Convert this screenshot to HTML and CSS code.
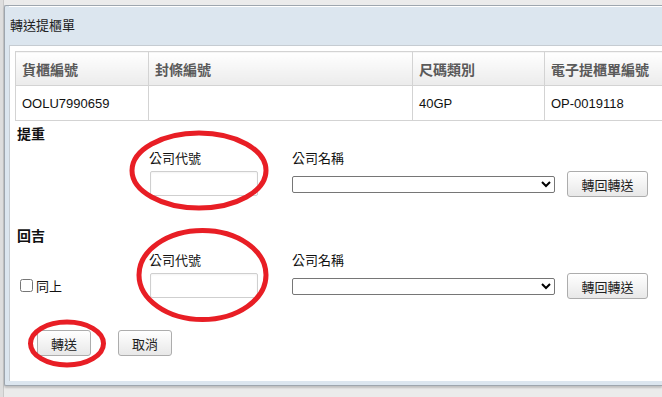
FILE: index.html
```html
<!DOCTYPE html>
<html lang="zh-Hant">
<head>
    <meta charset="UTF-8">
    <meta name="viewport" content="width=device-width, initial-scale=1.0">
    <title>轉送提櫃單</title>
    <link rel="stylesheet" href="styles.css">
</head>
<body>
    <div class="page-edge"></div>

    <div class="dialog">
        <div class="dialog-title">轉送提櫃單</div>
        <div class="dialog-body">
            <table class="grid">
                <colgroup>
                    <col class="c1"><col class="c2"><col class="c3"><col class="c4">
                </colgroup>
                <thead>
                    <tr>
                        <th>貨櫃編號</th>
                        <th>封條編號</th>
                        <th>尺碼類別</th>
                        <th>電子提櫃單編號</th>
                    </tr>
                </thead>
                <tbody>
                    <tr>
                        <td>OOLU7990659</td>
                        <td></td>
                        <td>40GP</td>
                        <td>OP-0019118</td>
                    </tr>
                </tbody>
            </table>

            <div class="section first">
                <h4>提重</h4>
                <div class="form-row">
                    <div class="lead"></div>
                    <div class="field">
                        <label>公司代號</label>
                        <input type="text" class="code-input">
                    </div>
                    <div class="field">
                        <label>公司名稱</label>
                        <div class="pick-line">
                            <select class="name-select"><option></option></select>
                            <button class="btn btn-wide">轉回轉送</button>
                        </div>
                    </div>
                </div>
            </div>

            <div class="section">
                <h4>回吉</h4>
                <div class="form-row">
                    <div class="lead">
                        <label class="check"><input type="checkbox"> 同上</label>
                    </div>
                    <div class="field">
                        <label>公司代號</label>
                        <input type="text" class="code-input">
                    </div>
                    <div class="field">
                        <label>公司名稱</label>
                        <div class="pick-line">
                            <select class="name-select"><option></option></select>
                            <button class="btn btn-wide">轉回轉送</button>
                        </div>
                    </div>
                </div>
            </div>

            <div class="actions">
                <button class="btn">轉送</button>
                <button class="btn">取消</button>
            </div>
        </div>
    </div>

    <!-- hand-drawn highlight marks over the dialog -->
    <svg class="marks" width="662" height="397" viewBox="0 0 662 397">
        <ellipse cx="199" cy="170.5" rx="67" ry="37.5"/>
        <ellipse cx="202.5" cy="275" rx="63.5" ry="44.5"/>
        <ellipse cx="67" cy="343.5" rx="36.5" ry="21.5"/>
    </svg>
</body>
</html>
```

FILE: styles.css
```css
html, body { margin: 0; padding: 0; overflow: hidden; }
body { background: #ebebeb; width: 662px; height: 397px; position: relative; font-family: "Liberation Sans", "Noto Sans CJK TC", sans-serif; font-size: 13px; color: #111; }

.page-edge { position: absolute; left: 0; top: 0; width: 3px; height: 397px; background: #dedede; border-right: 1px solid #c9c9c9; }

.dialog { position: relative; margin: 5px 0 0 4px; width: 653px; background: #dce6ef; border: 1px solid #9ea6ae; border-right: none; border-radius: 2px 0 0 2px; padding: 0 0 4px 4px; box-shadow: 0 2px 2px rgba(0,0,0,0.18); }
.dialog-title { height: 38px; line-height: 38px; padding-left: 1px; font-size: 13px; color: #222; border-top: 1px solid #fff; }
.dialog-body { background: #fff; border-top: 1px solid #c6ccd2; border-left: 1px solid #c6ccd2; padding: 5px 0 25px 5px; overflow: hidden; }

.grid { border-collapse: collapse; width: 660px; table-layout: fixed; }
.grid col.c1 { width: 133px; }
.grid col.c2 { width: 264px; }
.grid col.c3 { width: 132px; }
.grid col.c4 { width: 131px; }
.grid th, .grid td { border: 1px solid #d3d3d3; padding: 0 6px; text-align: left; white-space: nowrap; }
.grid th { height: 33px; font-weight: bold; font-size: 14px; color: #5a5a5a; background: linear-gradient(#ffffff, #ebebeb); }
.grid td { height: 34px; font-size: 13px; color: #111; }

.section h4 { margin: 0; padding-left: 2px; font-size: 14px; line-height: 18px; font-weight: bold; color: #111; }
.section.first { margin-top: 4px; }
.section { margin-top: 30px; }

.form-row { display: flex; margin-top: 8px; }
.lead { width: 134px; align-self: flex-end; height: 28px; display: flex; align-items: center; }
.field { display: flex; flex-direction: column; }
.field label { line-height: 16px; font-size: 13px; margin-bottom: 4px; }
.field:nth-child(2) { width: 143px; }

.code-input { width: 108px; height: 25px; box-sizing: border-box; margin: 0 0 0 1px; border: 1px solid #cfcfcf; border-radius: 2px; box-shadow: inset 0 1px 2px rgba(0,0,0,0.05); }

.pick-line { display: flex; align-items: center; height: 26px; }
.name-select { width: 263px; height: 17px; box-sizing: border-box; margin: 0; padding: 0; border: 1px solid #767676; border-radius: 2px; background: #fff; font-size: 11px; }

.btn { height: 26px; width: 54px; box-sizing: border-box; padding: 0; font-family: "Noto Sans CJK TC", sans-serif; font-size: 13px; color: #222; background: linear-gradient(#ffffff, #e8e8e8); border: 1px solid #adadad; border-radius: 3px; }
.btn-wide { width: 81px; margin-left: 12px; }

.check { display: flex; align-items: center; padding-left: 5px; font-size: 13px; }
.check input { margin: 0 3px 0 0; width: 13px; height: 13px; }

.actions { display: flex; gap: 27px; padding-left: 22px; margin-top: 31px; }

.marks { position: absolute; left: 0; top: 0; pointer-events: none; }
.marks ellipse { fill: none; stroke: #e81e25; stroke-width: 5; }
```
